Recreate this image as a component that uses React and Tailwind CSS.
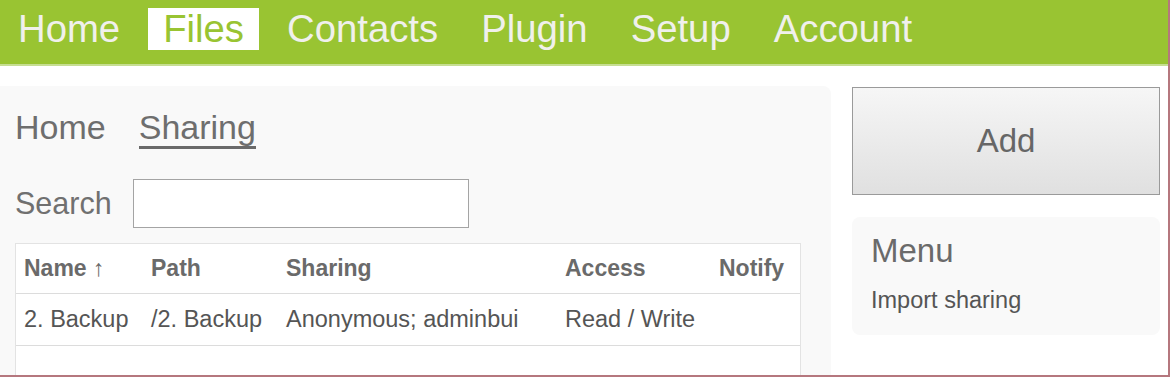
import React from "react";

const navItems = ["Home", "Files", "Contacts", "Plugin", "Setup", "Account"];

const rows = [
  { name: "2. Backup", path: "/2. Backup", sharing: "Anonymous; adminbui", access: "Read / Write", notify: "" },
];

export default function App() {
  return (
    <div className="w-[1170px] h-[377px] overflow-hidden bg-white border-r-2 border-b-2 border-[#b5777e] font-['Liberation_Sans',Arial,sans-serif]">
      {/* Top bar */}
      <div className="h-[66px] bg-[#99c432] border-b-2 border-[#c6de92] flex items-start pt-2 pl-[3px] gap-[13px]">
        {navItems.map((item) => (
          <div
            key={item}
            className={
              item === "Files"
                ? "px-[15px] h-[42px] leading-[42px] text-[38.3px] bg-white text-[#99c432]"
                : "px-[15px] h-[42px] leading-[42px] text-[38.3px] text-[#f0f0ec]"
            }
          >
            {item}
          </div>
        ))}
      </div>

      <div className="flex mt-5">
        {/* Main panel */}
        <div className="w-[831px] h-[300px] bg-[#f9f9f9] rounded-tr-lg pl-[15px] pt-[22px]">
          <div className="flex items-start gap-[33px] text-[34px] text-[#6e6e6e]">
            <span className="leading-[38px]">Home</span>
            <span className="leading-[38px] border-b-[3px] border-[#6a6a6a]">Sharing</span>
          </div>

          <div className="flex items-center gap-[21px] mt-[30px]">
            <span className="text-[30.5px] text-[#707070]">Search</span>
            <input className="w-[336px] h-[49px] bg-white border border-[#a4a4a4] outline-none" />
          </div>

          <div className="w-[786px] h-[200px] mt-[15px] bg-white border border-[#e3e3e3]">
            <div className="grid grid-cols-[127px_135px_279px_154px_1fr] h-[50px] items-center border-b border-[#dcdcdc] text-[23px] font-bold text-[#6a6a6a]">
              <div className="px-2">Name ↑</div>
              <div className="px-2">Path</div>
              <div className="px-2">Sharing</div>
              <div className="px-2">Access</div>
              <div className="px-2">Notify</div>
            </div>
            {rows.map((r) => (
              <div
                key={r.name}
                className="grid grid-cols-[127px_135px_279px_154px_1fr] h-[52px] items-center border-b border-[#dcdcdc] text-[23.5px] text-[#555]"
              >
                <div className="px-2 whitespace-nowrap">{r.name}</div>
                <div className="px-2 whitespace-nowrap">{r.path}</div>
                <div className="px-2 whitespace-nowrap">{r.sharing}</div>
                <div className="px-2 whitespace-nowrap">{r.access}</div>
                <div className="px-2">{r.notify}</div>
              </div>
            ))}
          </div>
        </div>

        {/* Right column */}
        <div className="ml-[21px] w-[308px] pt-px">
          <button className="w-[308px] h-[108px] border border-[#9a9a9a] bg-gradient-to-b from-[#f6f6f6] to-[#e0e0e0] text-[33px] text-[#666]">
            Add
          </button>
          <div className="mt-[22px] h-[118px] bg-[#f9f9f9] rounded-lg px-[19px] pt-4">
            <div className="text-[33px] leading-[36px] text-[#6a6a6a]">Menu</div>
            <div className="mt-[17px] text-[23.5px] leading-[28px] text-[#555]">Import sharing</div>
          </div>
        </div>
      </div>
    </div>
  );
}
